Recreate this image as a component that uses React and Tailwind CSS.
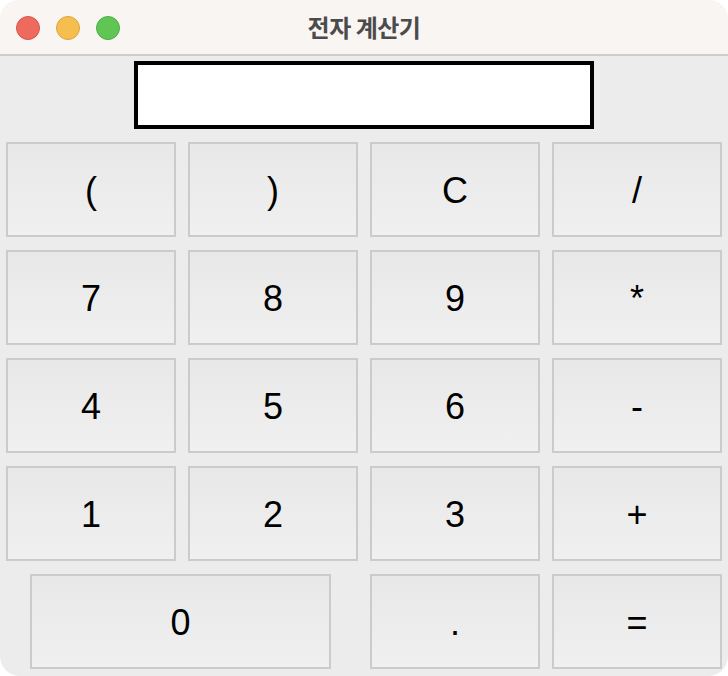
import React from "react";

const rows = [
  ["(", ")", "C", "/"],
  ["7", "8", "9", "*"],
  ["4", "5", "6", "-"],
  ["1", "2", "3", "+"],
];

function Key({ label, className = "" }) {
  return (
    <button
      className={
        "h-[95px] pt-[3px] border-2 border-[#cbcbcb] bg-gradient-to-b from-[#e8e8e8] to-[#f0f0f0] text-[36px] leading-none text-black flex items-center justify-center " +
        className
      }
      style={{ fontFamily: "'Liberation Sans', Arial, sans-serif" }}
    >
      {label}
    </button>
  );
}

export default function App() {
  return (
    <div className="w-[728px] h-[676px] bg-white">
      <div className="w-[728px] h-[676px] rounded-[20px] overflow-hidden bg-[#ececec] flex flex-col">
        <div className="relative h-[56px] shrink-0 bg-[#f9f5f2] border-b-2 border-[#cfcdcb] flex items-center justify-center">
          <div className="absolute left-[16px] top-[16px] flex gap-[16px]">
            <span className="w-[24px] h-[24px] rounded-full bg-[#ee6a5f] border border-[#d9544a]" />
            <span className="w-[24px] h-[24px] rounded-full bg-[#f5bf4f] border border-[#dba43b]" />
            <span className="w-[24px] h-[24px] rounded-full bg-[#61c554] border border-[#4ead43]" />
          </div>
          <span
            className="text-[24px] font-bold text-[#4b4b4b] tracking-[-0.5px]"
            style={{ fontFamily: "'Noto Sans CJK KR', 'Noto Sans', sans-serif" }}
          >
            전자 계산기
          </span>
        </div>
        <div className="flex justify-center pt-[5px]">
          <div className="w-[460px] h-[68px] border-4 border-black bg-white" />
        </div>
        <div className="grid grid-cols-[170px_170px_170px_170px] gap-x-[12px] gap-y-[13px] pl-[6px] pt-[13px]">
          {rows.map((r) => r.map((k) => <Key key={k} label={k} />))}
          <div className="col-span-2 pl-[24px]">
            <Key label="0" className="w-[301px]" />
          </div>
          <Key label="." />
          <Key label="=" />
        </div>
      </div>
    </div>
  );
}
